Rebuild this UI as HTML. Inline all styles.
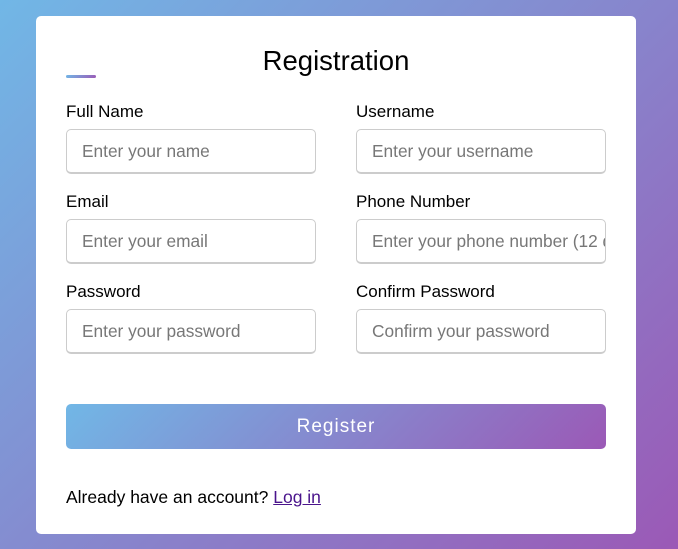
<!DOCTYPE html>
<html><head><style>
*{margin:0;padding:0;box-sizing:border-box}
body{width:678px;height:549px;overflow:hidden;font-family:"Liberation Sans",sans-serif;background:linear-gradient(135deg,#71b7e6,#9b59b6);position:relative}
.card{position:absolute;left:36px;top:16px;width:600px;height:518px;background:#fff;border-radius:5px}
h1{position:absolute;left:0;width:600px;top:29px;text-align:center;font-size:27.5px;font-weight:normal;color:#000}
.ul{position:absolute;left:30px;top:59px;width:30px;height:3px;border-radius:2px;background:linear-gradient(135deg,#71b7e6,#9b59b6)}
.f{position:absolute;width:250px}
.f label{display:block;font-size:17px;color:#000;height:22px;line-height:24px}
.f div{margin-top:7px;height:45px;border:1px solid #ccc;border-bottom-width:2px;border-radius:5px;padding-left:15px;line-height:42px;font-size:17.3px;color:#777;white-space:nowrap;overflow:hidden}
.btn{position:absolute;left:30px;top:388px;width:540px;height:45px;border-radius:5px;background:linear-gradient(135deg,#71b7e6,#9b59b6);color:#fff;font-size:19px;letter-spacing:1px;text-align:center;line-height:45px}
.foot{position:absolute;left:30px;top:471px;font-size:17.5px;color:#000}
.foot a{color:#4a148c;text-decoration:underline}
</style></head><body>
<div class="card">
<h1>Registration</h1><div class="ul"></div>
<div class="f" style="left:30px;top:84px"><label>Full Name</label><div>Enter your name</div></div>
<div class="f" style="left:320px;top:84px"><label>Username</label><div>Enter your username</div></div>
<div class="f" style="left:30px;top:174px"><label>Email</label><div>Enter your email</div></div>
<div class="f" style="left:320px;top:174px"><label>Phone Number</label><div>Enter your phone number (12 digits)</div></div>
<div class="f" style="left:30px;top:264px"><label>Password</label><div>Enter your password</div></div>
<div class="f" style="left:320px;top:264px"><label>Confirm Password</label><div>Confirm your password</div></div>
<div class="btn">Register</div>
<div class="foot">Already have an account? <a>Log in</a></div>
</div>
</body></html>
